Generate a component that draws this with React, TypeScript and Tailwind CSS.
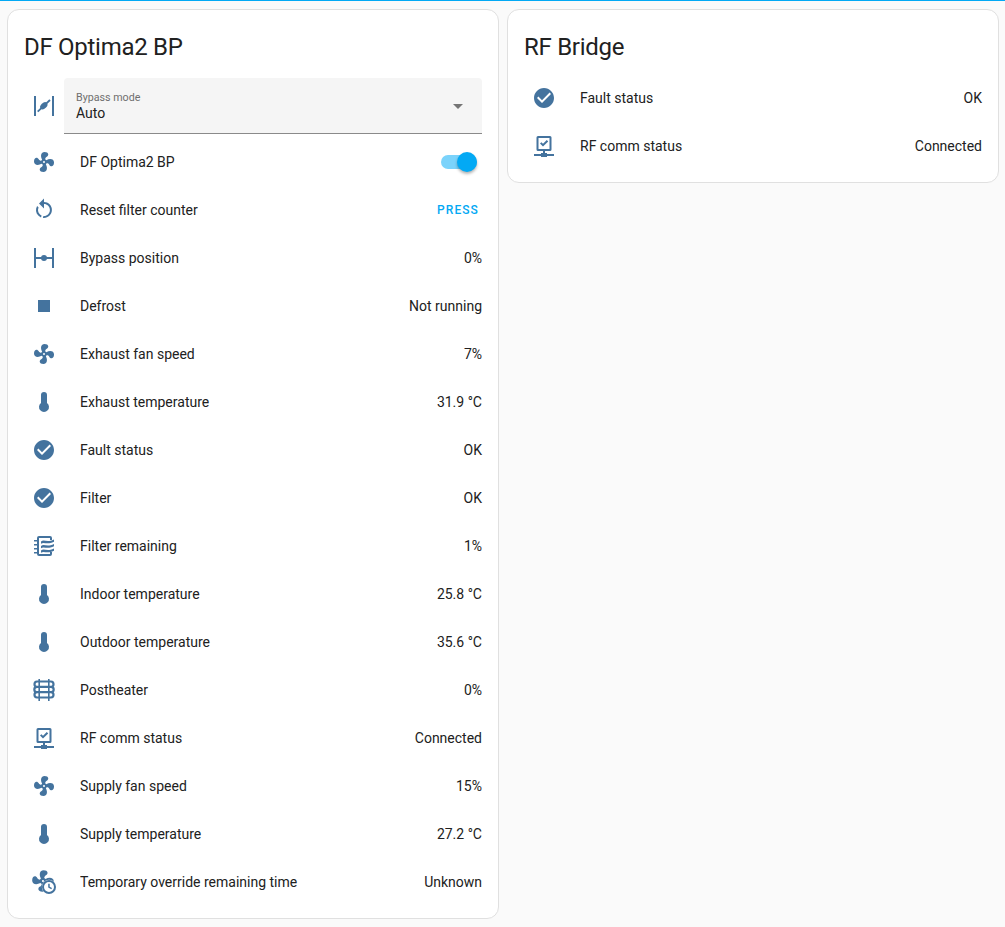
import React from "react";

const fan = "M12,11A1,1 0 0,0 11,12A1,1 0 0,0 12,13A1,1 0 0,0 13,12A1,1 0 0,0 12,11M12.5,2C17,2 17.11,5.57 14.75,6.75C13.76,7.24 13.32,8.29 13.13,9.22C13.61,9.42 14.03,9.73 14.35,10.13C18.05,8.13 22.03,8.92 22.03,12.5C22.03,17 18.46,17.1 17.28,14.73C16.78,13.74 15.72,13.3 14.79,13.11C14.59,13.59 14.28,14 13.88,14.34C15.87,18.03 15.08,22 11.5,22C7,22 6.91,18.42 9.27,17.24C10.25,16.75 10.69,15.71 10.89,14.79C10.4,14.59 9.97,14.27 9.65,13.87C5.96,15.85 2,15.07 2,11.5C2,7 5.56,6.89 6.74,9.26C7.24,10.25 8.29,10.68 9.22,10.87C9.41,10.39 9.73,9.97 10.14,9.65C8.15,5.96 8.94,2 12.5,2Z";

const P: Record<string, React.ReactNode> = {
  fan: <path d={fan} />,
  restart: <path d="M12,4C14.1,4 16.1,4.8 17.6,6.3C20.7,9.4 20.7,14.5 17.6,17.6C15.8,19.5 13.3,20.2 10.9,19.9L11.4,17.9C13.1,18.1 14.9,17.5 16.2,16.2C18.5,13.9 18.5,10.1 16.2,7.7C15.1,6.6 13.5,6 12,6V10.6L7,5.6L12,0.6V4M6.3,17.6C3.7,15 3.3,11 5.1,7.9L6.6,9.4C5.5,11.6 5.9,14.4 7.8,16.2C8.3,16.7 8.9,17.1 9.6,17.4L9,19.4C8,19 7.1,18.4 6.3,17.6Z" />,
  valve: (
    <g>
      <path d="M2 2H4V22H2V2M20 2H22V22H20V2M4 11H20V13H4Z" />
      <circle cx="12" cy="12" r="3" />
    </g>
  ),
  open: (
    <g>
      <path d="M2 2H4V22H2V2M20 2H22V22H20V2" />
      <path d="M5.7 17.7L18 6" fill="none" stroke="#44739e" strokeWidth="1.8" />
      <ellipse cx="11.8" cy="11.8" rx="4.2" ry="2.8" transform="rotate(-44 11.8 11.8)" />
    </g>
  ),
  stop: <path d="M18,18H6V6H18V18Z" />,
  therm: <path d="M15 13V5A3 3 0 0 0 9 5V13A5 5 0 1 0 15 13Z" />,
  check: <path d="M12 2C6.5 2 2 6.5 2 12S6.5 22 12 22 22 17.5 22 12 17.5 2 12 2M10 17L5 12L6.41 10.59L10 14.17L17.59 6.58L19 8L10 17Z" />,
  filter: (
    <g>
      <path d="M7 2H18A2 2 0 0 1 20 4V6H18V4H7V20H18V18H20V20A2 2 0 0 1 18 22H7A2 2 0 0 1 5 20V4A2 2 0 0 1 7 2Z" />
      <path d="M2 6H7V7.6H2ZM2 10H7V11.6H2ZM2 14H7V15.6H2ZM2 18H7V19.6H2Z" />
      <path d="M9 7.5C12 5 15 9 22 5.5V7.8C15 11.3 12 7.5 9 9.8ZM9 12C12 9.5 15 13.5 22 10V12.3C15 15.8 12 12 9 14.3ZM9 16.5C12 14 15 18 22 14.5V16.8C15 20.3 12 16.5 9 18.8Z" />
    </g>
  ),
  heater: (
    <g>
      <path d="M19 3.5H5A2.67 2.67 0 0 0 5 8.83H19A2.67 2.67 0 0 1 19 14.17H5A2.67 2.67 0 0 0 5 19.5H19M19 3.5A2.67 2.67 0 0 1 19 8.83M19 14.17A2.67 2.67 0 0 1 19 19.5M5 8.83A2.67 2.67 0 0 0 5 14.17" fill="none" stroke="#44739e" strokeWidth="2.2" />
      <path d="M6.4 1H8V23H6.4ZM16 1H17.6V23H16Z" />
    </g>
  ),
  lan: <path d="M6 2H18A1.5 1.5 0 0 1 19.5 3.5V15.5A1.5 1.5 0 0 1 18 17H13V19H15V20H22V22H15V23H9V22H2V20H9V19H11V17H6A1.5 1.5 0 0 1 4.5 15.5V3.5A1.5 1.5 0 0 1 6 2ZM6.5 4V15H17.5V4ZM8 9.6L9.4 8.2L11 9.8L14.8 6L16.2 7.4L11 12.6Z" />,
  fanclock: (
    <g>
      <path d={fan} transform="translate(-2 -2) scale(1.08)" />
      <circle cx="17" cy="17" r="7.2" fill="#ffffff" />
      <path fillRule="evenodd" d="M17 10A7 7 0 1 1 17 24A7 7 0 0 1 17 10ZM17 12A5 5 0 1 0 17 22A5 5 0 0 0 17 12ZM16.2 13.8H17.7V16.7L20 18L19.3 19.2L16.2 17.4Z" />
    </g>
  ),
};

function Icon({ name }: { name: string }) {
  return (
    <svg viewBox="0 0 24 24" className="w-6 h-6 fill-[#44739e] shrink-0 overflow-visible">
      {P[name]}
    </svg>
  );
}

function Row({ icon, label, value, children }: { icon: string; label: string; value?: string; children?: React.ReactNode }) {
  return (
    <div className="flex items-center h-12">
      <div className="w-10 flex justify-center shrink-0">
        <Icon name={icon} />
      </div>
      <div className="ml-4 flex-1 truncate">{label}</div>
      {value !== undefined && <div className="ml-4">{value}</div>}
      {children}
    </div>
  );
}

const rows1: [string, string, string][] = [
  ["valve", "Bypass position", "0%"],
  ["stop", "Defrost", "Not running"],
  ["fan", "Exhaust fan speed", "7%"],
  ["therm", "Exhaust temperature", "31.9 °C"],
  ["check", "Fault status", "OK"],
  ["check", "Filter", "OK"],
  ["filter", "Filter remaining", "1%"],
  ["therm", "Indoor temperature", "25.8 °C"],
  ["therm", "Outdoor temperature", "35.6 °C"],
  ["heater", "Postheater", "0%"],
  ["lan", "RF comm status", "Connected"],
  ["fan", "Supply fan speed", "15%"],
  ["therm", "Supply temperature", "27.2 °C"],
  ["fanclock", "Temporary override remaining time", "Unknown"],
];

export default function App() {
  return (
    <div className="h-[927px] overflow-hidden bg-[#fafafa] text-[#212121] text-sm font-['Roboto',sans-serif] border-t border-[#03a9f4]">
      <div className="flex items-start gap-2 pl-[7px] pr-[6px] pt-2">
        <div className="w-[492px] h-[910px] shrink-0 bg-white border border-[#e0e0e0] rounded-xl">
          <h1 className="text-2xl leading-8 font-normal tracking-[-0.288px] pl-4 pt-[21px]">DF Optima2 BP</h1>
          <div className="px-4 pt-[15px]">
            <div className="flex items-center h-14 mb-1">
              <div className="w-10 flex justify-center shrink-0">
                <Icon name="open" />
              </div>
              <div className="flex-1 h-14 bg-[#f5f5f5] rounded-t border-b border-[#8a8a8a] flex items-center justify-between pl-3 pr-[19px]">
                <div>
                  <div className="text-[10.7px] leading-[13px] text-[#6f6f6f] mt-[2px] mb-[1px]">Bypass mode</div>
                  <div className="text-sm leading-[17px]">Auto</div>
                </div>
                <div className="w-0 h-0 mt-[1px] border-x-[5px] border-x-transparent border-t-[5px] border-t-[#757575]" />
              </div>
            </div>
            <Row icon="fan" label="DF Optima2 BP">
              <div className="relative w-[36px] h-[14px] mr-[5px] rounded-full bg-[#7bd3fb]">
                <div className="absolute right-0 top-[-3px] w-5 h-5 rounded-full bg-[#03a9f4] shadow-[0_2px_3px_rgba(0,0,0,0.3)]" />
              </div>
            </Row>
            <Row icon="restart" label="Reset filter counter">
              <div className="text-xs font-medium tracking-[1.1px] text-[#03a9f4] mr-[3px]">PRESS</div>
            </Row>
            {rows1.map(([i, l, v]) => (
              <Row key={l} icon={i} label={l} value={v} />
            ))}
          </div>
        </div>
        <div className="flex-1 h-[174px] bg-white border border-[#e0e0e0] rounded-xl">
          <h1 className="text-2xl leading-8 font-normal tracking-[-0.288px] pl-4 pt-[21px]">RF Bridge</h1>
          <div className="px-4 mt-[11px]">
            <Row icon="check" label="Fault status" value="OK" />
            <Row icon="lan" label="RF comm status" value="Connected" />
          </div>
        </div>
      </div>
    </div>
  );
}
